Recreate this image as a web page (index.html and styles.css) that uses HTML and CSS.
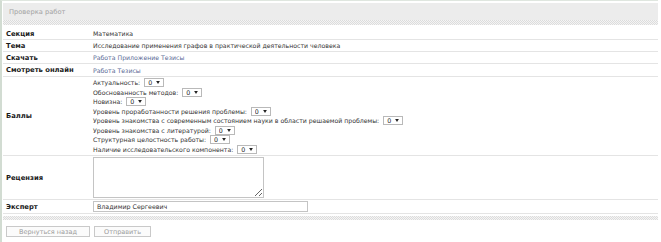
FILE: index.html
```html
<!DOCTYPE html>
<html lang="ru">
<head>
<meta charset="utf-8">
<title>Проверка работ</title>
<link rel="stylesheet" href="styles.css">
</head>
<body>
<div class="panel">
  <div class="panel-head">Проверка работ</div>
  <div class="strip"></div>
  <div class="form">
    <div class="row r1"><div class="lbl">Секция</div><div class="val">Математика</div></div>
    <div class="row r2"><div class="lbl">Тема</div><div class="val">Исследование применения графов в практической деятельности человека</div></div>
    <div class="row r3"><div class="lbl">Скачать</div><div class="val"><span class="links"><a href="#">Работа</a> <a href="#">Приложение</a> <a href="#">Тезисы</a></span></div></div>
    <div class="row r4"><div class="lbl">Смотреть онлайн</div><div class="val"><span class="links"><a href="#">Работа</a> <a href="#">Тезисы</a></span></div></div>
    <div class="row r-scores"><div class="lbl">Баллы</div>
      <div class="val opts">
        <div class="opt">Актуальность: <span class="sel"><select><option>0</option></select><svg class="caret" viewBox="0 0 5 4"><path d="M0 0H5L2.5 4Z"/></svg></span></div>
        <div class="opt">Обоснованность методов: <span class="sel"><select><option>0</option></select><svg class="caret" viewBox="0 0 5 4"><path d="M0 0H5L2.5 4Z"/></svg></span></div>
        <div class="opt">Новизна: <span class="sel"><select><option>0</option></select><svg class="caret" viewBox="0 0 5 4"><path d="M0 0H5L2.5 4Z"/></svg></span></div>
        <div class="opt">Уровень проработанности решения проблемы: <span class="sel"><select><option>0</option></select><svg class="caret" viewBox="0 0 5 4"><path d="M0 0H5L2.5 4Z"/></svg></span></div>
        <div class="opt">Уровень знакомства с современным состоянием науки в области решаемой проблемы: <span class="sel"><select><option>0</option></select><svg class="caret" viewBox="0 0 5 4"><path d="M0 0H5L2.5 4Z"/></svg></span></div>
        <div class="opt">Уровень знакомства с литературой: <span class="sel"><select><option>0</option></select><svg class="caret" viewBox="0 0 5 4"><path d="M0 0H5L2.5 4Z"/></svg></span></div>
        <div class="opt">Структурная целостность работы: <span class="sel"><select><option>0</option></select><svg class="caret" viewBox="0 0 5 4"><path d="M0 0H5L2.5 4Z"/></svg></span></div>
        <div class="opt">Наличие исследовательского компонента: <span class="sel"><select><option>0</option></select><svg class="caret" viewBox="0 0 5 4"><path d="M0 0H5L2.5 4Z"/></svg></span></div>
      </div>
    </div>
    <div class="row r-review"><div class="lbl">Рецензия</div><div class="val"><textarea class="review"></textarea></div></div>
    <div class="row r-expert"><div class="lbl">Эксперт</div><div class="val"><input class="expert" type="text" value="Владимир Сергеевич"></div></div>
  </div>
  <div class="strip strip2"></div>
  <div class="actions">
    <button class="btn btn-back">Вернуться назад</button>
    <button class="btn btn-send">Отправить</button>
  </div>
</div>
</body>
</html>
```

FILE: styles.css
```css
* { box-sizing: border-box; }
html, body { margin: 0; padding: 0; background: #fff; }
body {
  font-family: "DejaVu Sans", Verdana, sans-serif;
  font-size: 6.2px;
  color: #333;
}
.panel {
  width: 658px;
  height: 242px;
  border-left: 2px solid #d2dcd2;
  border-top: 1px solid #dfe6df;
  padding: 2px 0 0 1px;
}
.panel-head {
  height: 17px;
  background: #ececec;
  color: #a3a3a3;
  font-size: 6.7px;
  padding-left: 6px;
  display: flex;
  align-items: center;
}
.strip {
  height: 5px;
  background: repeating-conic-gradient(#dcdcdc 0 25%, #f4f4f4 0 50%) 0 0 / 2px 2px;
}
.form { margin-top: 3px; }
.row {
  display: flex;
  border-bottom: 1px solid #e4e4e4;
}
.lbl {
  width: 87px;
  flex: none;
  padding-left: 3px;
  font-weight: bold;
  font-size: 6.8px;
  color: #1a1a1a;
  display: flex;
  align-items: center;
}
.val {
  padding-left: 3px;
  display: flex;
  align-items: center;
}
.r1, .r2, .r3 { height: 12px; }
.r4 { height: 13px; }
a { color: #5a6b96; text-decoration: none; }
.links { white-space: pre; }
.opts {
  flex-direction: column;
  align-items: flex-start;
  padding-top: 1px;
  height: 78px;
}
.opt {
  height: 9.5px;
  display: flex;
  align-items: center;
  white-space: pre;
}
.sel {
  position: relative;
  display: inline-block;
  width: 20px;
  height: 9px;
  margin-left: 2px;
}
.sel select {
  appearance: none;
  -webkit-appearance: none;
  width: 20px;
  height: 9px;
  border: 1px solid #b9b9b9;
  border-radius: 0;
  background: #fff;
  font: inherit;
  font-size: 6.3px;
  color: #222;
  padding: 0 0 0 3px;
  margin: 0;
  line-height: 7px;
}
.caret {
  position: absolute;
  right: 4px;
  top: 3px;
  width: 4px;
  height: 3px;
  fill: #222;
}
.r-review { height: 44px; }
.r-review .val { align-items: flex-start; padding-top: 1px; }
.review {
  width: 171px;
  height: 41px;
  border: 1px solid #c4c4c4;
  border-radius: 0;
  margin: 0;
  padding: 0;
  resize: both;
  font: inherit;
}
.r-expert { height: 14px; }
.r-expert .val { flex: 1; }
.expert {
  width: 215px;
  height: 11px;
  border: 1px solid #c4c4c4;
  border-radius: 0;
  margin: 0;
  padding: 0 0 0 3px;
  font: inherit;
  font-size: 6.3px;
  color: #333;
}
.strip2 { margin-top: 2px; height: 4px; }
.actions {
  display: flex;
  gap: 4px;
  margin: 6px 0 0 3px;
}
.btn {
  height: 11px;
  border: 1px solid #c9c9c9;
  background: #fbfbfb;
  color: #9a9a9a;
  font: inherit;
  font-size: 6.5px;
  padding: 0;
  margin: 0;
  border-radius: 0;
}
.btn-back { width: 84px; }
.btn-send { width: 57px; }
```
